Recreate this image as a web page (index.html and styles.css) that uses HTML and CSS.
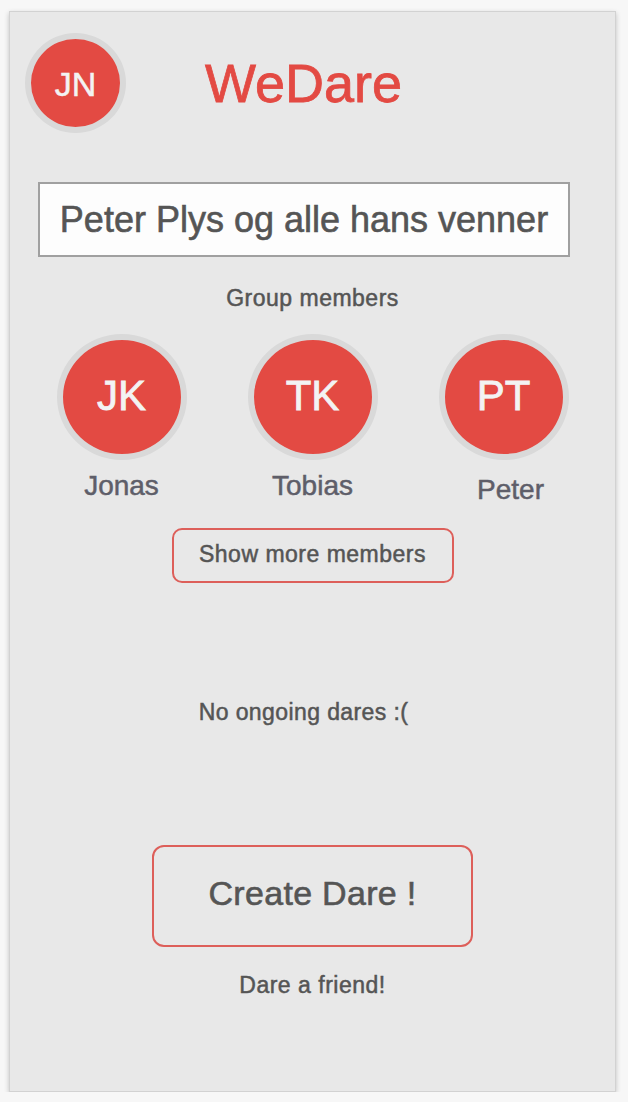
FILE: index.html
```html
<!DOCTYPE html>
<html lang="en">
<head>
<meta charset="utf-8">
<title>WeDare</title>
<link rel="stylesheet" href="styles.css">
</head>
<body>
<div class="frame">
  <header class="header">
    <div class="avatar avatar-small">JN</div>
    <h1 class="brand">WeDare</h1>
  </header>

  <div class="group-name">Peter Plys og alle hans venner</div>

  <p class="section-label">Group members</p>

  <div class="members">
    <div class="member">
      <div class="avatar avatar-large">JK</div>
      <span class="member-name">Jonas</span>
    </div>
    <div class="member">
      <div class="avatar avatar-large">TK</div>
      <span class="member-name">Tobias</span>
    </div>
    <div class="member member-low">
      <div class="avatar avatar-large">PT</div>
      <span class="member-name">Peter</span>
    </div>
  </div>

  <button class="btn btn-more">Show more members</button>

  <p class="empty">No ongoing dares :(</p>

  <button class="btn btn-create">Create Dare !</button>

  <p class="hint">Dare a friend!</p>
</div>
</body>
</html>
```

FILE: styles.css
```css
* { box-sizing: border-box; }

html, body {
  margin: 0;
  padding: 0;
  background: #f7f7f7;
}

body {
  font-family: "Liberation Sans", Arial, sans-serif;
  color: #555555;
  padding: 11px 0 0 9px;
}

.frame {
  width: 607px;
  height: 1081px;
  background: #e8e8e8;
  border: 1px solid #d2d2d2;
  box-shadow: 0 2px 5px rgba(0, 0, 0, 0.22);
  display: flex;
  flex-direction: column;
  align-items: center;
  -webkit-text-stroke: 0.5px currentColor;
}

.header {
  align-self: stretch;
  display: flex;
  align-items: center;
  padding: 21px 0 0 15px;
  gap: 79px;
}

.avatar {
  display: flex;
  align-items: center;
  justify-content: center;
  border-radius: 50%;
  background: #e34a43;
  color: #f3f3f3;
  border: 6px solid #d9d9d9;
  flex-shrink: 0;
}

.avatar-small {
  width: 101px;
  height: 100px;
  font-size: 34px;
  padding-top: 2px;
}

.brand {
  margin: 0;
  font-size: 54px;
  line-height: 54px;
  font-weight: normal;
  color: #e34a43;
  -webkit-text-stroke: 0.8px currentColor;
}

.group-name {
  align-self: flex-start;
  margin: 49px 0 0 28px;
  width: 532px;
  height: 75px;
  background: #fdfdfd;
  border: 2px solid #a0a0a0;
  display: flex;
  align-items: center;
  justify-content: center;
  font-size: 36px;
  color: #555555;
  padding-top: 1px;
  -webkit-text-stroke: 0.6px currentColor;
}

.section-label {
  margin: 28px 0 0;
  font-size: 23px;
  line-height: 26px;
  letter-spacing: 0.5px;
  color: #555555;
}

.members {
  margin-top: 23px;
  width: 573px;
  display: grid;
  grid-template-columns: repeat(3, 1fr);
}

.member {
  display: flex;
  flex-direction: column;
  align-items: center;
}

.avatar-large {
  width: 130px;
  height: 126px;
  font-size: 42px;
  padding-bottom: 2px;
  -webkit-text-stroke: 0.8px currentColor;
}

.member-name {
  margin-top: 10px;
  font-size: 28px;
  line-height: 32px;
  color: #5e5e69;
}

.member-low .member-name {
  margin: 14px 0 0 14px;
}

.btn {
  font-family: inherit;
  background: transparent;
  border: 2px solid #dd5f5a;
  color: #555555;
  cursor: pointer;
  -webkit-text-stroke: 0.5px currentColor;
}

.btn-more {
  margin-top: 22px;
  width: 282px;
  height: 55px;
  border-radius: 10px;
  font-size: 23px;
  letter-spacing: 0.5px;
  padding: 0 0 3px;
}

.empty {
  margin: 116px 18px 0 0;
  font-size: 23px;
  line-height: 26px;
  letter-spacing: 0.4px;
  color: #555555;
}

.btn-create {
  margin-top: 120px;
  width: 321px;
  height: 102px;
  border-radius: 12px;
  font-size: 34px;
  letter-spacing: 0.3px;
  padding: 0 0 6px;
  -webkit-text-stroke: 0.6px currentColor;
}

.hint {
  margin: 25px 0 0;
  font-size: 23px;
  line-height: 26px;
  letter-spacing: 0.5px;
  color: #555555;
}
```
